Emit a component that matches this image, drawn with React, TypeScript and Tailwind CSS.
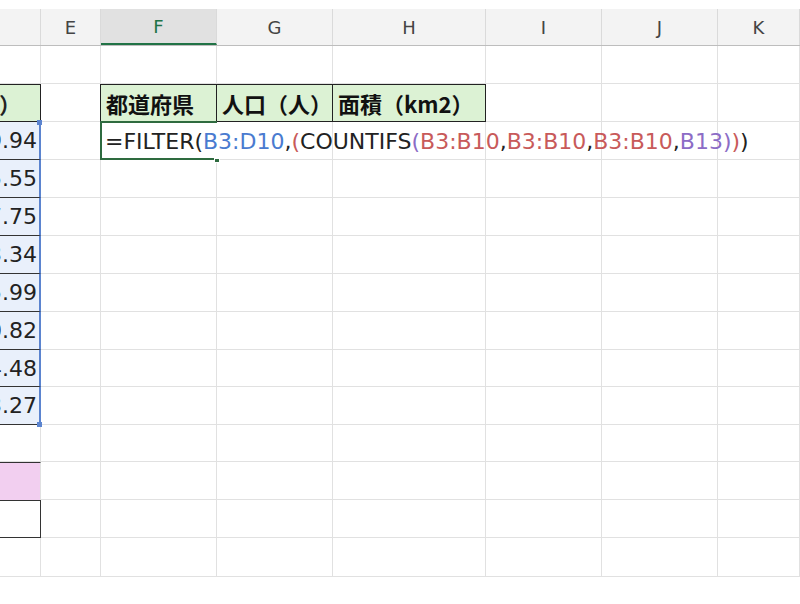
import React from 'react'

const cols = [
  { key: 'D', w: 'w-[41px]', label: '' },
  { key: 'E', w: 'w-[60px]', label: 'E' },
  { key: 'F', w: 'w-[116px]', label: 'F' },
  { key: 'G', w: 'w-[116px]', label: 'G' },
  { key: 'H', w: 'w-[153px]', label: 'H' },
  { key: 'I', w: 'w-[116px]', label: 'I' },
  { key: 'J', w: 'w-[116px]', label: 'J' },
  { key: 'K', w: 'w-[82px]', label: 'K' },
]

const rowHeights = [
  'h-[38px]', 'h-[38px]', 'h-[38px]', 'h-[38px]', 'h-[38px]', 'h-[38px]', 'h-[38px]',
  'h-[38px]', 'h-[37px]', 'h-[38px]', 'h-[37px]', 'h-[38px]', 'h-[38px]', 'h-[39px]',
]

// D column values (only the tail is visible)
const areas = ['1319.94', '1495.55', '2277.75', '5173.34', '3975.99', '8400.82', '1914.48', '4003.27']

const font = { fontFamily: '"DejaVu Sans", "Noto Sans CJK JP", sans-serif' }
const jp = { fontFamily: '"Noto Sans CJK JP", sans-serif' }

function Formula() {
  return (
    <span className="whitespace-nowrap text-[22px] text-[#222]" style={font}>
      =FILTER(<span className="text-[#4a7bd0]">B3:D10</span>,<span className="text-[#c85a5a]">(</span>COUNTIFS
      <span className="text-[#8c6cc6]">(</span>
      <span className="text-[#c85a5a]">B3:B10</span>,<span className="text-[#c85a5a]">B3:B10</span>,
      <span className="text-[#c85a5a]">B3:B10</span>,<span className="text-[#8c6cc6]">B13</span>
      <span className="text-[#8c6cc6]">)</span>
      <span className="text-[#c85a5a]">)</span>)
    </span>
  )
}

function DCell({ row }: { row: number }) {
  if (row === 1) {
    return (
      <div className="h-full bg-[#dcf2d4] border-t border-b border-r border-[#222] flex items-center justify-end overflow-hidden pr-[19px]">
        <span className="shrink-0 text-[22px] font-bold text-[#222]" style={jp}>（km2）</span>
      </div>
    )
  }
  if (row >= 2 && row <= 9) {
    return (
      <div className="relative h-full bg-[#e9f0fb] border-b border-[#333] border-r-2 border-r-[#5b84cf]">
        <div className="h-full flex items-center justify-end overflow-hidden pr-[2px]">
          <span className="shrink-0 text-[22px] text-[#222] whitespace-nowrap" style={font}>{areas[row - 2]}</span>
        </div>
        {row === 2 && <div className="absolute -top-[2px] -right-[3px] w-[5px] h-[5px] bg-[#5b84cf]" />}
        {row === 9 && <div className="absolute -bottom-[3px] -right-[3px] w-[5px] h-[5px] bg-[#5b84cf]" />}
      </div>
    )
  }
  if (row === 11) {
    return <div className="h-full bg-[#f2cff0] border-t border-[#333] border-r border-r-[#e1e1e1]" />
  }
  if (row === 12) {
    return <div className="h-full border border-l-0 border-[#333]" />
  }
  return <div className="h-full border-b border-r border-[#e1e1e1]" />
}

function Cell({ col, row }: { col: string; row: number }) {
  if (row === 1 && (col === 'F' || col === 'G' || col === 'H')) {
    const text = col === 'F' ? '都道府県' : col === 'G' ? '人口（人）' : '面積（km2）'
    return (
      <div className="h-full bg-[#dcf2d4] border-t border-b border-r border-[#222] flex items-center pl-[5px] overflow-hidden">
        <span className="text-[22px] font-bold text-[#111] whitespace-nowrap" style={jp}>{text}</span>
      </div>
    )
  }
  if (row === 2 && col === 'F') {
    return (
      <div className="relative h-full z-10">
        <div className="absolute -top-[1px] -left-[1px] right-0 bottom-0 border-2 border-r-0 border-[#2e6b3f]" />
        <div className="absolute left-[4px] top-0 h-full flex items-center">
          <Formula />
        </div>
        <div className="absolute -bottom-[3px] -right-[3px] w-[6px] h-[5px] bg-[#2e6b3f] border border-white" />
      </div>
    )
  }
  const emptyBorder = row === 1 && col === 'E' ? 'border-b border-r border-[#e1e1e1] border-r-[#222]' : 'border-b border-r border-[#e1e1e1]'
  return <div className={`h-full ${emptyBorder}`} />
}

export default function App() {
  return (
    <div className="w-[800px] h-[604px] overflow-hidden bg-white" style={font}>
      <div className="h-[9px] bg-white" />
      <div className="flex h-[37px] bg-[#f3f3f3] border-b border-[#bdbdbd]">
        {cols.map((c) => (
          <div
            key={c.key}
            className={`${c.w} shrink-0 flex items-center justify-center border-r border-[#dadada] text-[18px] ${
              c.key === 'F' ? 'bg-[#e1e1e1] text-[#217346] border-b-2 border-b-[#217346]' : 'text-[#444]'
            }`}
          >
            {c.label}
          </div>
        ))}
      </div>
      {rowHeights.map((h, row) => (
        <div key={row} className={`flex ${h}`}>
          {cols.map((c) => (
            <div key={c.key} className={`${c.w} shrink-0 h-full`}>
              {c.key === 'D' ? <DCell row={row} /> : <Cell col={c.key} row={row} />}
            </div>
          ))}
        </div>
      ))}
    </div>
  )
}
